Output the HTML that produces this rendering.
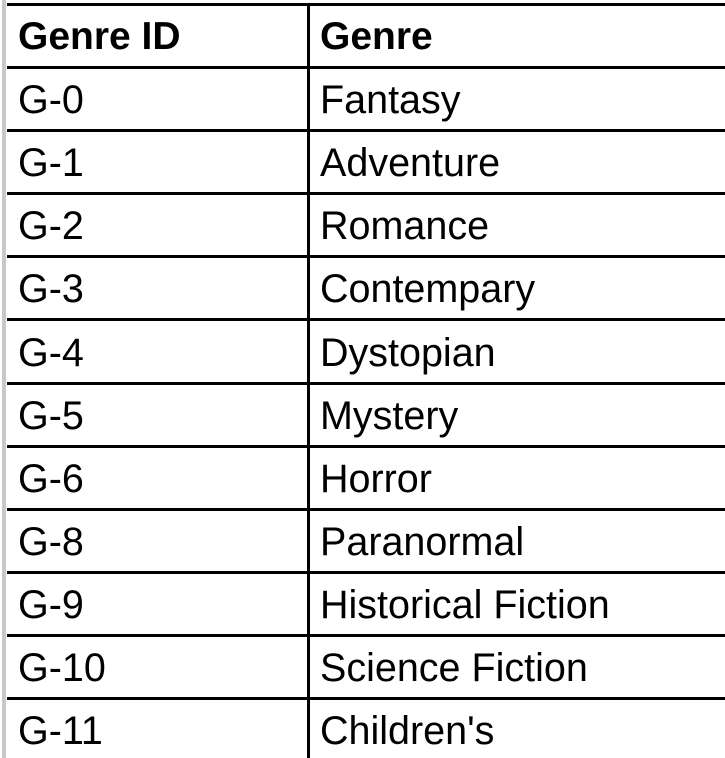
<!DOCTYPE html>
<html><head><style>
body{margin:0;width:725px;height:758px;background:#fff;position:relative;overflow:hidden;font-family:"Liberation Sans",Arial,sans-serif;}
.h{position:absolute;left:7px;right:0;height:3px;background:#000;}
.v{position:absolute;top:3px;bottom:0;left:307px;width:3px;background:#000;}
.g{position:absolute;left:2px;top:0;bottom:0;width:4px;background:#c8c8c8;}
.t{position:absolute;font-size:39.5px;line-height:36px;color:#000;white-space:nowrap;}
.b{font-weight:bold;font-size:39px;}
</style></head><body>
<div class="g"></div>
<div class="v"></div>
<div class="h" style="top:3px"></div>
<div class="h" style="top:66px"></div>
<div class="h" style="top:129px"></div>
<div class="h" style="top:192px"></div>
<div class="h" style="top:255px"></div>
<div class="h" style="top:318px"></div>
<div class="h" style="top:382px"></div>
<div class="h" style="top:445px"></div>
<div class="h" style="top:508px"></div>
<div class="h" style="top:571px"></div>
<div class="h" style="top:634px"></div>
<div class="h" style="top:697px"></div>

<div class="t b" style="left:18px;top:19px">Genre ID</div><div class="t b" style="left:320px;top:19px">Genre</div>
<div class="t" style="left:18px;top:82px">G-0</div><div class="t" style="left:320px;top:82px">Fantasy</div>
<div class="t" style="left:18px;top:145px">G-1</div><div class="t" style="left:320px;top:145px">Adventure</div>
<div class="t" style="left:18px;top:208px">G-2</div><div class="t" style="left:320px;top:208px">Romance</div>
<div class="t" style="left:18px;top:271px">G-3</div><div class="t" style="left:320px;top:271px">Contempary</div>
<div class="t" style="left:18px;top:335px">G-4</div><div class="t" style="left:320px;top:335px">Dystopian</div>
<div class="t" style="left:18px;top:398px">G-5</div><div class="t" style="left:320px;top:398px">Mystery</div>
<div class="t" style="left:18px;top:461px">G-6</div><div class="t" style="left:320px;top:461px">Horror</div>
<div class="t" style="left:18px;top:524px">G-8</div><div class="t" style="left:320px;top:524px">Paranormal</div>
<div class="t" style="left:18px;top:587px">G-9</div><div class="t" style="left:320px;top:587px">Historical Fiction</div>
<div class="t" style="left:18px;top:650px">G-10</div><div class="t" style="left:320px;top:650px">Science Fiction</div>
<div class="t" style="left:18px;top:713px">G-11</div><div class="t" style="left:320px;top:713px">Children's</div>
</body></html>
